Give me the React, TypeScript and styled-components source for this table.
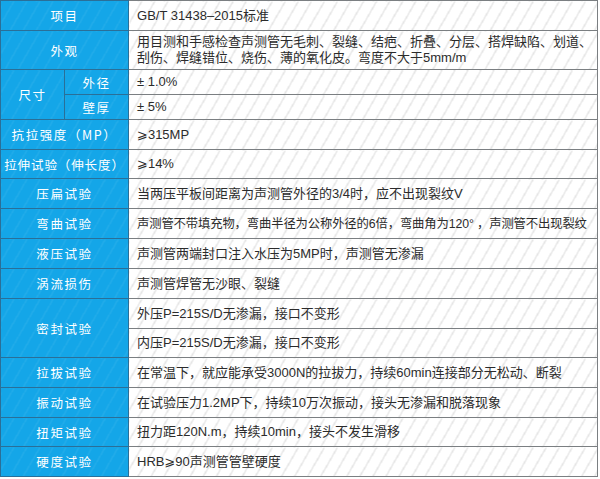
import React from 'react';
import styled, { createGlobalStyle } from 'styled-components';

const GlobalStyle = createGlobalStyle`
  html, body {
    margin: 0;
    padding: 0;
    background: #fff;
  }
  body {
    font-family: "Liberation Sans", "Noto Sans CJK SC", sans-serif;
  }
`;

type Item = { head: string; text: string; h: number; small?: boolean; tight?: boolean };

const middle: Item[] = [
  { head: '抗拉强度（MP）', text: '⩾315MP', h: 30 },
  { head: '拉伸试验（伸长度）', text: '⩾14%', h: 29, tight: true },
  { head: '压扁试验', text: '当两压平板间距离为声测管外径的3/4时，应不出现裂纹V', h: 30 },
  { head: '弯曲试验', text: '声测管不带填充物，弯曲半径为公称外径的6倍，弯曲角为120° ，声测管不出现裂纹', h: 30, small: true },
  { head: '液压试验', text: '声测管两端封口注入水压为5MP时，声测管无渗漏', h: 30 },
  { head: '涡流损伤', text: '声测管焊管无沙眼、裂缝', h: 30 },
];

const tail: Item[] = [
  { head: '拉拔试验', text: '在常温下，就应能承受3000N的拉拔力，持续60min连接部分无松动、断裂', h: 30 },
  { head: '振动试验', text: '在试验压力1.2MP下，持续10万次振动，接头无渗漏和脱落现象', h: 30 },
  { head: '扭矩试验', text: '扭力距120N.m，持续10min，接头不发生滑移', h: 29 },
  { head: '硬度试验', text: 'HRB⩾90声测管管壁硬度', h: 30 },
];

const SimpleRow: React.FC<{ item: Item }> = ({ item }) => (
  <Row $h={item.h}>
    <Head colSpan={2} $tight={item.tight}>{item.head}</Head>
    <Cell $small={item.small}>{item.text}</Cell>
  </Row>
);

const App: React.FC<{}> = () => {
  return (
    <>
      <GlobalStyle />
      <Table>
        <colgroup>
          <Col $w={64} />
          <Col $w={64} />
          <Col />
        </colgroup>
        <tbody>
          <Row $h={30}>
            <Head colSpan={2}>项目</Head>
            <Cell>GB/T 31438–2015标准</Cell>
          </Row>
          <Row $h={39}>
            <Head colSpan={2}>外观</Head>
            <Cell>
              用目测和手感检查声测管无毛刺、裂缝、结疤、折叠、分层、搭焊缺陷、划道、
              <br />
              刮伤、焊缝错位、烧伤、薄的氧化皮。弯度不大于5mm/m
            </Cell>
          </Row>
          <Row $h={25}>
            <Head rowSpan={2}>尺寸</Head>
            <Head>外径</Head>
            <Cell>± 1.0%</Cell>
          </Row>
          <Row $h={25}>
            <Head>壁厚</Head>
            <Cell>± 5%</Cell>
          </Row>
          {middle.map((r) => (
            <SimpleRow key={r.head} item={r} />
          ))}
          <Row $h={30}>
            <Head colSpan={2} rowSpan={2}>密封试验</Head>
            <Cell>外压P=215S/D无渗漏，接口不变形</Cell>
          </Row>
          <Row $h={29}>
            <Cell>内压P=215S/D无渗漏，接口不变形</Cell>
          </Row>
          {tail.map((r) => (
            <SimpleRow key={r.head} item={r} />
          ))}
        </tbody>
      </Table>
    </>
  );
};

const Table = styled.table`
  width: 598px;
  border-collapse: collapse;
  table-layout: fixed;
  font-size: 13px;
  border: 1px solid #6f7478;
`;

const Col = styled.col<{ $w?: number }>`
  width: ${(p) => (p.$w ? `${p.$w}px` : 'auto')};
`;

const Row = styled.tr<{ $h: number }>`
  height: ${(p) => p.$h}px;
`;

const Head = styled.td<{ $tight?: boolean }>`
  background-color: #14a6e8;
  background-image: repeating-linear-gradient(
    120deg,
    rgba(255, 255, 255, 0) 0px,
    rgba(255, 255, 255, 0) 10px,
    rgba(255, 255, 255, 0.07) 10px,
    rgba(255, 255, 255, 0.07) 11.3px
  );
  color: #fff;
  text-align: center;
  vertical-align: middle;
  padding: 0;
  font-family: "Noto Sans CJK SC", "Liberation Sans", sans-serif;
  font-size: 12.5px;
  letter-spacing: ${(p) => (p.$tight ? '0.9px' : '1.6px')};
  white-space: nowrap;
  border: 1px solid #2a6f98;
`;

const Cell = styled.td<{ $small?: boolean }>`
  background-color: #fff;
  background-image: repeating-linear-gradient(
    120deg,
    rgba(0, 0, 0, 0) 0px,
    rgba(0, 0, 0, 0) 9.8px,
    #e6e6e6 9.8px,
    #e6e6e6 11.3px
  );
  color: #2b2b2b;
  padding: 0 0 0 8px;
  vertical-align: middle;
  line-height: 16px;
  font-family: "Liberation Sans", "Noto Sans CJK SC", "DejaVu Sans", sans-serif;
  font-size: ${(p) => (p.$small ? '12.3px' : '13px')};
  letter-spacing: ${(p) => (p.$small ? '-0.1px' : '0')};
  white-space: nowrap;
  border: 1px solid #7b7f82;
`;

export default React.memo(App);
